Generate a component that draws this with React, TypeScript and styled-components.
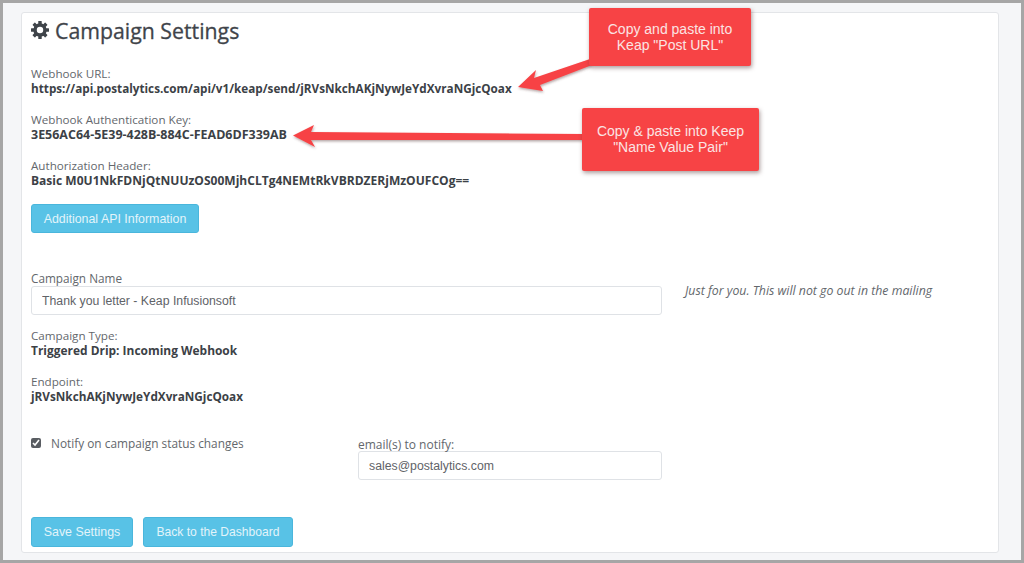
import React from "react";
import styled, { createGlobalStyle } from "styled-components";

const Global = createGlobalStyle`
  html, body { margin: 0; padding: 0; }
  body { width: 1024px; height: 563px; overflow: hidden; font-family: "Open Sans", "Noto Sans", sans-serif; }
`;

const Frame = styled.div`
  position: relative;
  box-sizing: border-box;
  width: 1024px;
  height: 563px;
  border: 3px solid #a6a6a6;
  background: #f5f6f8;
  padding: 9px 22px 7px 18px;
`;

const Card = styled.main`
  box-sizing: border-box;
  height: 541px;
  background: #fff;
  border: 1px solid #e3e5e8;
  border-radius: 3px;
  padding: 4px 9px 0;
  color: #555a60;
`;

const Title = styled.h1`
  display: flex;
  align-items: center;
  gap: 6px;
  margin: 0 0 23px;
  height: 26px;
  font-size: 21.3px;
  font-weight: 400;
  color: #3f444a;
  -webkit-text-stroke: 0.3px #3f444a;
  svg { width: 18px; height: 18px; }
`;

const Field = styled.div`
  font-size: 11.65px;
  line-height: 15px;
  margin-bottom: 16px;
`;

const Label = styled.div`
  color: #63676c;
`;

const Value = styled.div<{ $size: number }>`
  font-weight: 700;
  color: #3c4146;
  font-size: ${(p) => p.$size}px;
`;

const Button = styled.button<{ $size?: number; $w: number }>`
  box-sizing: border-box;
  width: ${(p) => p.$w}px;
  height: 30px;
  padding: 0;
  background: #58c2e6;
  border: 1px solid #4ab6dc;
  border-radius: 3px;
  color: #e3f4fa;
  font-family: "Liberation Sans", Arial, sans-serif;
  font-size: ${(p) => p.$size ?? 12.4}px;
  white-space: nowrap;
`;

const ApiButton = styled(Button)`
  display: block;
  margin: 0 0 38px;
  height: 29px;
`;

const NameRow = styled.div`
  display: flex;
  gap: 23px;
  margin-bottom: 13px;
`;

const NameCol = styled.div`
  width: 631px;
  font-size: 11.75px;
  line-height: 15px;
  color: #63676c;
`;

const TextInput = styled.input<{ $w: number }>`
  display: block;
  box-sizing: border-box;
  width: ${(p) => p.$w}px;
  height: 29px;
  padding: 0 10px;
  border: 1px solid #dfe2e6;
  border-radius: 3px;
  background: #fff;
  color: #5f6368;
  font-family: "Liberation Sans", Arial, sans-serif;
  font-size: 12.27px;
  outline: none;
`;

const Hint = styled.div`
  padding-top: 13px;
  font-size: 12.3px;
  line-height: 14px;
  font-style: italic;
  color: #63676c;
`;

const NotifyRow = styled.div`
  display: flex;
  margin-top: 32px;
  height: 79px;
`;

const CheckLabel = styled.label`
  display: flex;
  align-items: flex-start;
  gap: 10px;
  width: 327px;
  font-size: 11.85px;
  line-height: 14px;
  color: #63676c;
`;

const CheckBox = styled.input`
  width: 10px;
  height: 10px;
  margin: 2px 0 0;
  accent-color: #595d62;
`;

const EmailCol = styled.div`
  font-size: 12px;
  line-height: 13px;
  color: #63676c;
  margin-top: 2px;
`;

const Actions = styled.div`
  display: flex;
  gap: 10px;
  margin-top: 2px;
`;

const Callout = styled.div<{ $x: number; $y: number; $w: number; $h: number; $pb: number }>`
  position: absolute;
  left: ${(p) => p.$x - 3}px;
  top: ${(p) => p.$y - 3}px;
  box-sizing: border-box;
  width: ${(p) => p.$w}px;
  height: ${(p) => p.$h}px;
  padding-bottom: ${(p) => p.$pb}px;
  display: flex;
  align-items: center;
  justify-content: center;
  text-align: center;
  background: #f74345;
  border-radius: 2px;
  box-shadow: 1px 2px 4px rgba(90, 60, 60, 0.5);
  color: #fbe3e3;
  font-family: "Liberation Sans", Arial, sans-serif;
  font-size: 14px;
  line-height: 16px;
`;

const ArrowLayer = styled.svg`
  position: absolute;
  left: -3px;
  top: -3px;
  width: 1024px;
  height: 563px;
  pointer-events: none;
`;

const GearIcon = () => (
  <svg viewBox="-12 -12 24 24" fill="#3f444a" aria-hidden="true">
    <circle r="6.6" fill="none" stroke="#3f444a" strokeWidth="4.6" />
    {[0, 45, 90, 135, 180, 225, 270, 315].map((a) => (
      <rect key={a} x="-2.3" y="-12" width="4.6" height="5" rx="0.7" transform={`rotate(${a})`} />
    ))}
  </svg>
);

export default function App() {
  return (
    <>
      <Global />
      <Frame>
        <Card>
          <Title>
            <GearIcon />
            Campaign Settings
          </Title>
          <Field>
            <Label>Webhook URL:</Label>
            <Value $size={11.72}>https://api.postalytics.com/api/v1/keap/send/jRVsNkchAKjNywJeYdXvraNGjcQoax</Value>
          </Field>
          <Field>
            <Label>Webhook Authentication Key:</Label>
            <Value $size={12.47}>3E56AC64-5E39-428B-884C-FEAD6DF339AB</Value>
          </Field>
          <Field>
            <Label>Authorization Header:</Label>
            <Value $size={12.04}>Basic M0U1NkFDNjQtNUUzOS00MjhCLTg4NEMtRkVBRDZERjMzOUFCOg==</Value>
          </Field>
          <ApiButton $w={168}>Additional API Information</ApiButton>
          <NameRow>
            <NameCol>
              Campaign Name
              <TextInput $w={631} readOnly value="Thank you letter - Keap Infusionsoft" />
            </NameCol>
            <Hint>Just for you. This will not go out in the mailing</Hint>
          </NameRow>
          <Field>
            <Label>Campaign Type:</Label>
            <Value $size={11.95}>Triggered Drip: Incoming Webhook</Value>
          </Field>
          <Field>
            <Label>Endpoint:</Label>
            <Value $size={11.75}>jRVsNkchAKjNywJeYdXvraNGjcQoax</Value>
          </Field>
          <NotifyRow>
            <CheckLabel>
              <CheckBox type="checkbox" readOnly checked />
              Notify on campaign status changes
            </CheckLabel>
            <EmailCol>
              email(s) to notify:
              <TextInput $w={304} readOnly value="sales@postalytics.com" />
            </EmailCol>
          </NotifyRow>
          <Actions>
            <Button $w={102}>Save Settings</Button>
            <Button $w={150} $size={12.1}>Back to the Dashboard</Button>
          </Actions>
        </Card>
        <ArrowLayer viewBox="0 0 1024 563">
          <defs>
            <filter id="shade" x="-10%" y="-30%" width="120%" height="170%">
              <feDropShadow dx="0.5" dy="1.5" stdDeviation="1.2" floodColor="#5a3c3c" floodOpacity="0.45" />
            </filter>
          </defs>
          <path d="M518 87 L536 70 L534 78 L590 59 L592 65 L540 85 L543 91 Z" fill="#f74345" filter="url(#shade)" />
          <path d="M293 135.5 L314 125 L311 132 L584 134 L584 140 L311 140 L315 147 Z" fill="#f74345" filter="url(#shade)" />
        </ArrowLayer>
        <Callout $x={589} $y={8} $w={162} $h={58} $pb={0}>
          Copy and paste into
          <br />
          Keap "Post URL"
        </Callout>
        <Callout $x={582} $y={108} $w={177} $h={63} $pb={2}>
          Copy &amp; paste into Keep
          <br />
          "Name Value Pair"
        </Callout>
      </Frame>
    </>
  );
}
